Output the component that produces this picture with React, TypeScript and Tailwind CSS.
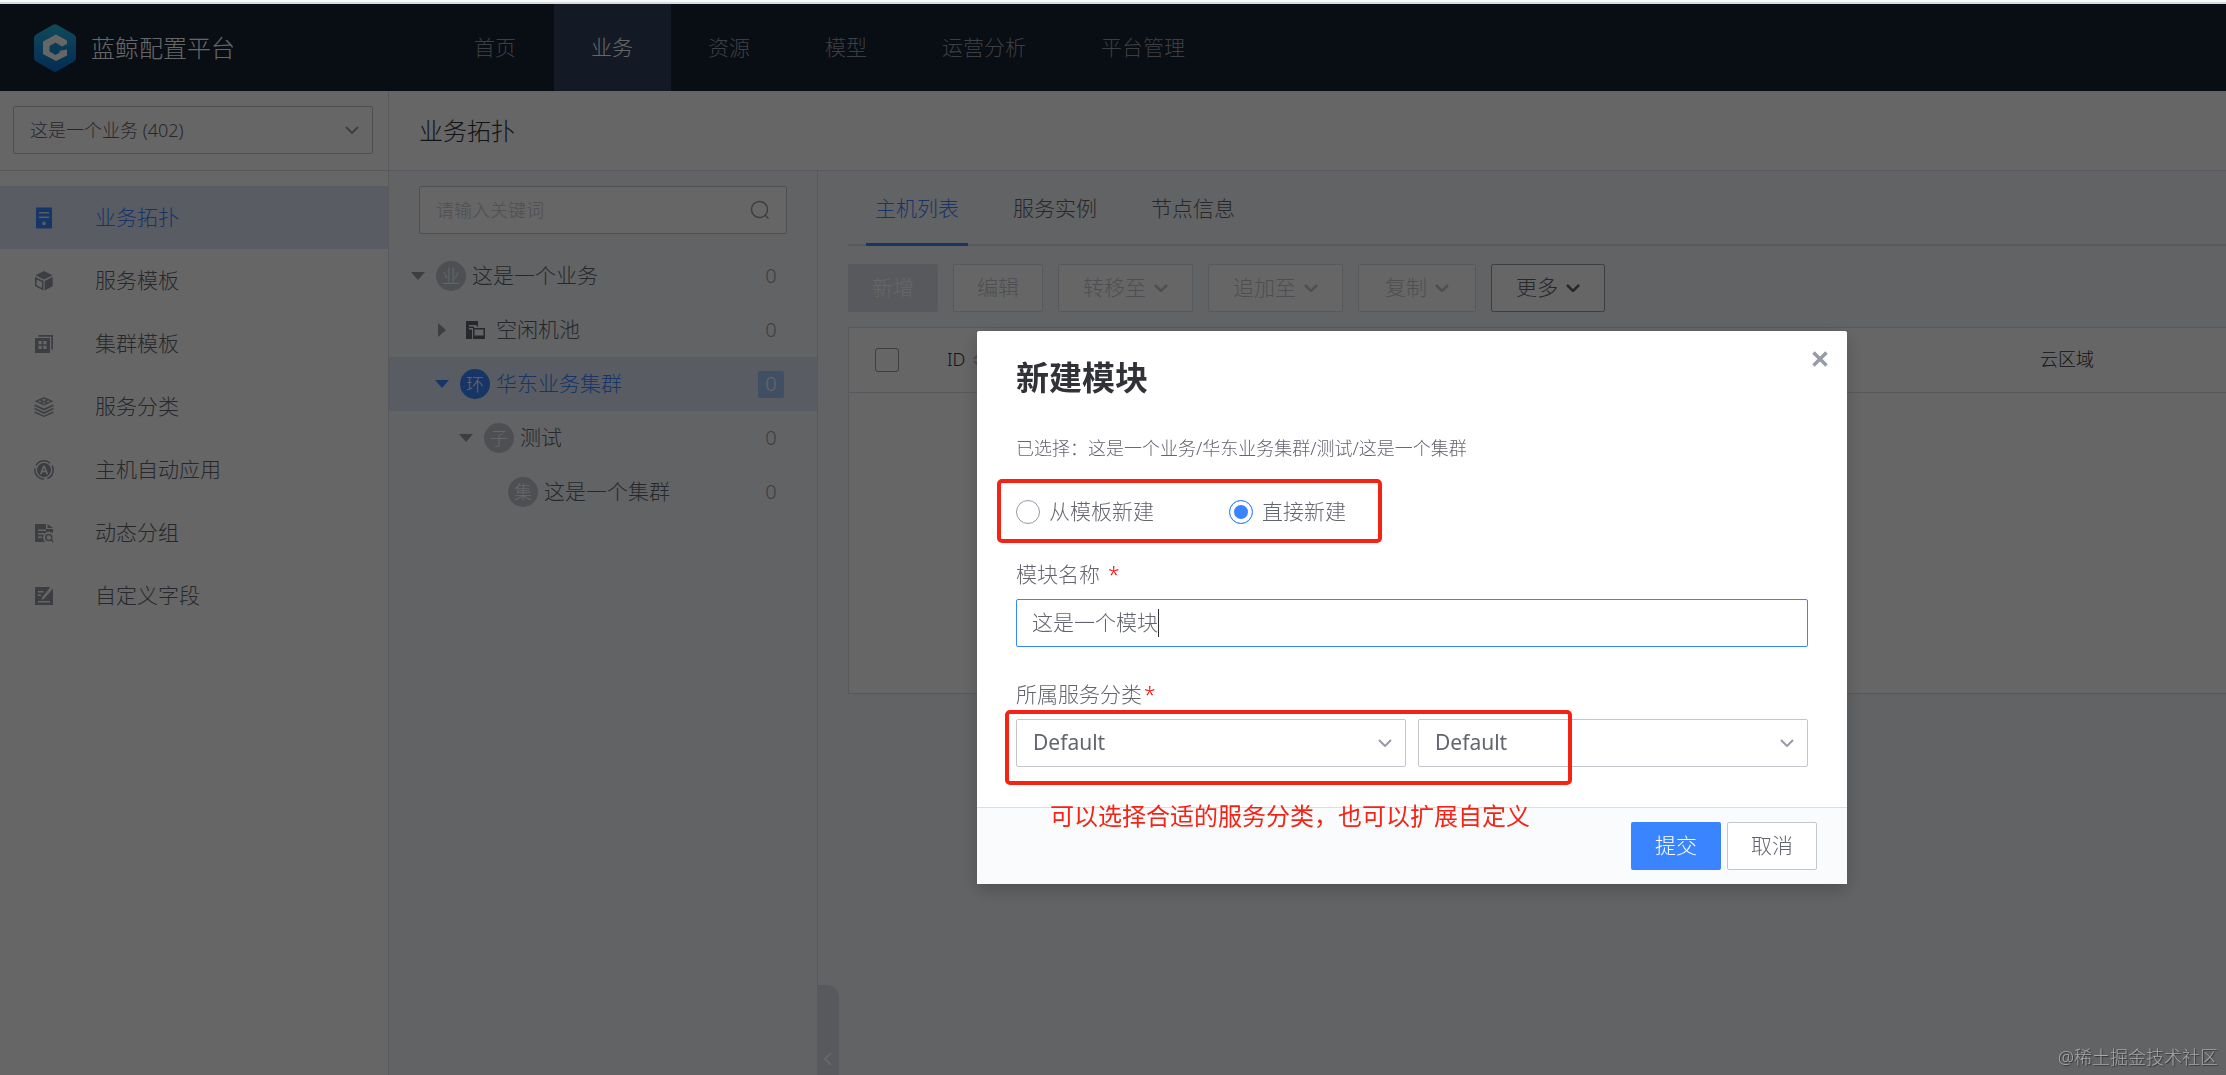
import React, { useState } from 'react';
import clsx from 'clsx';

const FONT = "font-['Noto_Sans','Noto_Sans_CJK_SC',sans-serif]";

const NAV = ['首页', '业务', '资源', '模型', '运营分析', '平台管理'];

/* ---------- icons ---------- */

function Chevron({ className, width = 2 }: { className?: string; width?: number }) {
  return (
    <svg viewBox="0 0 14 8" fill="none" stroke="currentColor" strokeWidth={width} className={clsx('w-3.5 h-2 shrink-0', className)}>
      <path d="M1 1l6 6 6-6" />
    </svg>
  );
}

function Logo() {
  return (
    <svg viewBox="0 0 42 48" className="w-[42px] h-12 shrink-0">
      <defs>
        <linearGradient id="logo-bg" x1="0" y1="0" x2="0" y2="1">
          <stop offset="0" stopColor="#2ab8e0" />
          <stop offset="1" stopColor="#0a6fd0" />
        </linearGradient>
      </defs>
      <path d="M19 .8a4 4 0 0 1 4 0l17 9.8a4 4 0 0 1 2 3.4v20a4 4 0 0 1-2 3.4l-17 9.8a4 4 0 0 1-4 0L2 37.4A4 4 0 0 1 0 34V14a4 4 0 0 1 2-3.4z" fill="url(#logo-bg)" />
      <path d="M22 10.500l11 6v3.500l-5 2.500-6.500-4-6 3.500v5.500l6 3.500 5-3-2-1 8.500-1.500v6L22 37l-13-7V17.500z" fill="#fff" />
    </svg>
  );
}

function MenuIcon({ name }: { name: string }) {
  return (
    <svg viewBox="0 0 20 22" fill="currentColor" className="w-5 h-[22px] shrink-0">
      {name === 'topology' && (
        <path fillRule="evenodd" d="M2 .5h16v21H2zM5 5v1.500h10V5zm0 4.500V11h10V9.500zm5 5a1.800 1.800 0 1 0 .01 0z" />
      )}
      {name === 'service' && (
        <>
          <path d="M10 1l8.500 4.200L10 9.600 1.500 5.200z" />
          <path d="M10.700 11l8-4.300v9.500l-8 4.400z" />
          <path fillRule="evenodd" d="M1 6.700l8.500 4.300v9.600L1 16.200zm1.600 2.700v5.800l5.300 2.700v-5.800z" />
        </>
      )}
      {name === 'cluster' && (
        <>
          <path d="M4.500 2H19v14.500h-1.700V3.700H4.500z" />
          <path fillRule="evenodd" d="M1 5h15v15H1zM4.500 8v3.200h3.200V8zm4.800 0v3.200h3.200V8zm-4.800 4.800V16h3.200v-3.200zm4.800 0V16h3.200v-3.200z" />
        </>
      )}
      {name === 'category' && (
        <>
          <path fillRule="evenodd" d="M10 1l9.500 4.300L10 9.600.5 5.300zm0 1.800L7.500 4 10 5.100 12.500 4zM5.500 4.400L3.700 5.300 6 6.300 8 5.400zm9 0l-2.500 1 2 .9 2.300-1zM10 6.200l-2 .9 2 .8 2-.8z" />
          <path d="M.5 8.200L10 12.500l9.500-4.300v1.900L10 14.400.5 10.100zM.5 11.700L10 16l9.500-4.300v1.900L10 17.900.5 13.600zM.5 15.200L10 19.500l9.500-4.300v1.900L10 21 .5 17.100z" />
        </>
      )}
      {name === 'auto' && (
        <>
          <circle cx="10" cy="11" r="9.200" fill="none" stroke="currentColor" strokeWidth="1.600" strokeDasharray="16 3.300" strokeDashoffset="5" />
          <path fillRule="evenodd" d="M10 4a7 7 0 1 0 .01 0zm-1 2.700h2l3.200 8.600h-1.900l-.7-2H8.400l-.7 2H5.800zm1 2.100l-1 3h2z" />
        </>
      )}
      {name === 'group' && (
        <>
          <path fillRule="evenodd" d="M1 2h11v5h7v4.200a5.500 5.500 0 0 0-8 8.800H1zm3 5.500V9h8V7.500zM4 11v1.500h6V11zm0 3.500V16h4v-1.500z" />
          <path d="M13.500 2L19 6h-5.500z" />
          <circle cx="14.800" cy="15.500" r="3" fill="none" stroke="currentColor" strokeWidth="1.500" />
          <path d="M16.300 18l1-1 2.500 2.500-1 1z" />
        </>
      )}
      {name === 'field' && (
        <path fillRule="evenodd" d="M1 2h15.500L8.200 12.300 7.500 15l2.500-1.200L19 3.500V20H1zm3 4v1.400h5.500V6zm0 3.500v1.400h3V9.500zM4 16v1.400h12V16z" />
      )}
    </svg>
  );
}

function PoolIcon() {
  return (
    <svg viewBox="0 0 20 20" fill="currentColor" className="w-5 h-5 shrink-0">
      <path fillRule="evenodd" d="M1 1h12v5.500h-1.500V5H4v1.500h5V8H4v1.500h3V19H1z" />
      <path fillRule="evenodd" d="M8 8h12v11H8zm1.500 1.500v6h9v-6z" />
    </svg>
  );
}

/* ---------- data ---------- */

const MENU = [
  { icon: 'topology', label: '业务拓扑' },
  { icon: 'service', label: '服务模板' },
  { icon: 'cluster', label: '集群模板' },
  { icon: 'category', label: '服务分类' },
  { icon: 'auto', label: '主机自动应用' },
  { icon: 'group', label: '动态分组' },
  { icon: 'field', label: '自定义字段' },
];

interface TreeNode {
  label: string;
  badge?: string;
  arrow?: 'open' | 'closed';
  indent: string;
  active?: boolean;
}

const TREE: TreeNode[] = [
  { label: '这是一个业务', badge: '业', arrow: 'open', indent: 'pl-[21px]' },
  { label: '空闲机池', arrow: 'closed', indent: 'pl-[45px]' },
  { label: '华东业务集群', badge: '环', arrow: 'open', indent: 'pl-[45px]', active: true },
  { label: '测试', badge: '子', arrow: 'open', indent: 'pl-[69px]' },
  { label: '这是一个集群', badge: '集', indent: 'pl-[93px]' },
];

const ACTIONS = [
  { label: '编辑', width: 'w-[90px]' },
  { label: '转移至', width: 'w-[135px]', menu: true },
  { label: '追加至', width: 'w-[135px]', menu: true },
  { label: '复制', width: 'w-[118px]', menu: true },
  { label: '更多', width: 'w-[114px]', menu: true, enabled: true },
];

/* ---------- page sections ---------- */

function Header() {
  return (
    <header className="flex items-stretch h-[87px] bg-[#182132]">
      <div className="flex items-center w-[437px] pl-[34px] gap-[15px]">
        <Logo />
        <h1 className="text-[24px] text-white">蓝鲸配置平台</h1>
      </div>
      <nav className="flex">
        {NAV.map((item) => (
          <a
            key={item}
            href="#"
            className={clsx(
              'flex items-center pl-[37px] pr-[38px] text-[21px]',
              item === '业务' ? 'bg-[#343f5f] text-white' : 'text-[#979ba5]',
            )}
          >
            {item}
          </a>
        ))}
      </nav>
    </header>
  );
}

function Sidebar() {
  return (
    <aside className="w-[389px] shrink-0 border-r border-[#dcdee5] bg-white">
      <div className="h-20 border-b border-[#dcdee5] pt-[15px] pl-[13px] pr-[15px]">
        <div className="relative">
          <select
            aria-label="业务"
            className="appearance-none w-full h-12 pl-4 rounded-xs border border-[#c4c6cc] bg-white text-[18px] text-[#63656e]"
          >
            <option>这是一个业务 (402)</option>
          </select>
          <Chevron className="absolute right-3.5 top-5 text-[#979ba5] pointer-events-none" />
        </div>
      </div>
      <nav className="pt-[15px]">
        {MENU.map((item, i) => (
          <a
            key={item.label}
            href="#"
            className={clsx(
              'flex items-center h-[63px] pl-[34px] gap-[41px] text-[21px]',
              i === 0 ? 'bg-[#dfe7f8] text-[#3a84ff]' : 'text-[#63656e]',
            )}
          >
            <span className={i === 0 ? 'text-[#3a84ff]' : 'text-[#979ba5]'}>
              <MenuIcon name={item.icon} />
            </span>
            {item.label}
          </a>
        ))}
      </nav>
    </aside>
  );
}

function TreeRow({ node }: { node: TreeNode }) {
  return (
    <li
      className={clsx(
        'flex items-center h-[54px] pr-[33px] text-[21px]',
        node.indent,
        node.active ? 'bg-[#dfe7f8] text-[#3a84ff]' : 'text-[#63656e]',
      )}
    >
      <span className={clsx('flex justify-center w-[16px] mr-2.5', !node.active && 'text-[#979ba5]')}>
        {node.arrow === 'open' && (
          <svg viewBox="0 0 14 8" fill="currentColor" className="w-3.5 h-2"><path d="M0 0h14L7 8z" /></svg>
        )}
        {node.arrow === 'closed' && (
          <svg viewBox="0 0 8 14" fill="currentColor" className="w-2 h-3.5"><path d="M0 0v14l8-7z" /></svg>
        )}
      </span>
      <span className="flex justify-center w-[30px] mr-1.5">
        {node.badge ? (
          <span
            className={clsx(
              'flex items-center justify-center size-[30px] rounded-full text-[18px] text-white',
              node.active ? 'bg-[#3a84ff]' : 'bg-[#c4c6cc]',
            )}
          >
            {node.badge}
          </span>
        ) : (
          <PoolIcon />
        )}
      </span>
      <span className="flex-1">{node.label}</span>
      <span
        className={clsx(
          'flex items-center justify-center w-[26px] h-[27px] rounded-xs text-[20px]',
          node.active ? 'bg-[#a2c5fd] text-white' : 'text-[#979ba5]',
        )}
      >
        0
      </span>
    </li>
  );
}

function TopologyPanel() {
  return (
    <section className="relative w-[429px] shrink-0 border-r border-[#dcdee5] pt-[15px]">
      <label className="flex items-center h-12 mx-[30px] px-4 rounded-xs border border-[#c4c6cc] bg-white">
        <input
          type="text"
          aria-label="搜索"
          placeholder="请输入关键词"
          className="flex-1 min-w-0 outline-none font-light text-[18px] placeholder:text-[#c4c6cc]"
        />
        <svg viewBox="0 0 20 20" fill="none" stroke="#979ba5" strokeWidth="1.500" className="size-5">
          <circle cx="9.500" cy="9.500" r="8" />
          <path d="M15.500 15.500l3 3" />
        </svg>
      </label>
      <ul className="mt-[15px]">
        {TREE.map((node) => (
          <TreeRow key={node.label} node={node} />
        ))}
      </ul>
      {/* Collapse handle, hangs over the main area */}
      <button
        aria-label="收起"
        className="absolute left-full bottom-0 w-[22px] h-[90px] rounded-tr-[12px] bg-[#dcdee5] text-white"
      >
        <Chevron className="absolute bottom-3 left-1 rotate-90" />
      </button>
    </section>
  );
}

function HostPanel() {
  return (
    <section className="flex-1 min-w-0 pl-[30px]">
      <div className="flex h-[75px] border-b-2 border-[#dcdee5]">
        {['主机列表', '服务实例', '节点信息'].map((tab, i) => (
          <button
            key={tab}
            className={clsx('relative px-[27px] pt-0.5 text-[21px]', i === 0 ? 'text-[#3a84ff]' : 'text-[#63656e]')}
          >
            {tab}
            {i === 0 && <span className="absolute inset-x-[18px] -bottom-0.5 h-[3px] bg-[#3a84ff]" />}
          </button>
        ))}
      </div>
      <div className="flex gap-[15px] mt-[18px] text-[21px]">
        <button disabled className="w-[90px] h-12 rounded-xs bg-[#dcdee5] text-white">新增</button>
        {ACTIONS.map((action) => (
          <button
            key={action.label}
            disabled={!action.enabled}
            className={clsx(
              'flex items-center justify-center gap-2 h-12 rounded-xs border bg-white',
              action.width,
              action.enabled ? 'border-[#979ba5] text-[#63656e]' : 'border-[#dcdee5] text-[#c4c6cc]',
            )}
          >
            {action.label}
            {action.menu && <Chevron width={2.5} />}
          </button>
        ))}
      </div>
      <div className="mt-[15px] h-[367px] border-y border-l border-[#dcdee5] bg-white">
        <table className="w-full table-fixed text-[18px] text-[#313238]">
          <thead>
            <tr className="h-16 border-b border-[#dcdee5]">
              <th className="w-[98px] pl-[26px] text-left">
                <input type="checkbox" aria-label="全选" className="block appearance-none size-6 rounded-[3px] border border-[#979ba5] bg-white" />
              </th>
              <th className="text-left font-light">
                <span className="flex items-center gap-2">
                  ID
                  <svg viewBox="0 0 10 16" fill="#c4c6cc" className="w-2.5 h-4"><path d="M0 7l5-6 5 6zM0 9l5 6 5-6z" /></svg>
                </span>
              </th>
              <th className="w-[186px] text-left font-light">云区域</th>
            </tr>
          </thead>
        </table>
      </div>
    </section>
  );
}

/* ---------- dialog ---------- */

function Required() {
  return <span className="text-[#f00]">*</span>;
}

function CreateModuleDialog() {
  const [mode, setMode] = useState('direct');
  const [name, setName] = useState('这是一个模块');

  const modes = [
    { value: 'template', label: '从模板新建' },
    { value: 'direct', label: '直接新建' },
  ];

  return (
    <div role="dialog" aria-labelledby="dialog-title" className="relative w-[870px] rounded-xs bg-white shadow-[0_6px_18px_rgba(0,0,0,0.2)] text-[21px] text-[#63656e]">
      <button aria-label="关闭" className="absolute top-5 right-[19px] text-[#979ba5]">
        <svg viewBox="0 0 16 16" fill="none" stroke="currentColor" strokeWidth="3.500" className="size-4">
          <path d="M1.500 1.500l13 13M14.500 1.500l-13 13" />
        </svg>
      </button>

      <div className="px-[39px] pt-[25px] pb-10">
        <h2 id="dialog-title" className="text-[33px] leading-[44px] font-bold text-[#313238]">新建模块</h2>
        <p className="mt-[35px] text-[18px] leading-[26px]">已选择：这是一个业务/华东业务集群/测试/这是一个集群</p>

        <div className="flex gap-[75px] mt-[39px]">
          {modes.map((item) => (
            <label key={item.value} className="flex items-center gap-[9px] h-6">
              <input
                type="radio"
                name="mode"
                value={item.value}
                checked={mode === item.value}
                onChange={() => setMode(item.value)}
                className="appearance-none size-6 rounded-full border border-[#979ba5] checked:border-[#3a84ff] checked:bg-[#3a84ff] checked:shadow-[inset_0_0_0_4px_#fff]"
              />
              {item.label}
            </label>
          ))}
        </div>

        <label htmlFor="module-name" className="flex gap-2 mt-9 leading-7">
          模块名称
          <Required />
        </label>
        <div className="flex items-center h-12 mt-[11px] pl-[15px] rounded-xs border border-[#3a84ff]">
          <input
            id="module-name"
            value={name}
            onChange={(e) => setName(e.target.value)}
            className="field-sizing-content outline-none font-light caret-transparent"
          />
          <span className="w-px h-7 bg-[#313238]" />
        </div>

        <label htmlFor="category" className="flex gap-0.5 mt-[33px] leading-7">
          所属服务分类
          <Required />
        </label>
        <div className="grid grid-cols-2 gap-3 mt-[11px]">
          {['category', 'sub-category'].map((id) => (
            <div key={id} className="relative">
              <select id={id} aria-label="所属服务分类" className="appearance-none w-full h-12 pl-4 rounded-xs border border-[#c4c6cc] bg-white font-normal">
                <option>Default</option>
              </select>
              <Chevron className="absolute right-3.5 top-5 text-[#979ba5] pointer-events-none" />
            </div>
          ))}
        </div>
      </div>

      <footer className="flex justify-end gap-1.5 px-[30px] py-3.5 border-t border-[#dcdee5] bg-[#fafbfd]">
        <button className="w-[90px] h-12 rounded-xs bg-[#3a84ff] text-white">提交</button>
        <button className="w-[90px] h-12 rounded-xs border border-[#c4c6cc] bg-white">取消</button>
      </footer>

      {/* Red guide marks on top of the form */}
      <div className="absolute left-5 top-[148px] w-[385px] h-16 rounded-[5px] border-4 border-[#f52314] pointer-events-none" />
      <div className="absolute left-7 top-[379px] w-[567px] h-[75px] rounded-[5px] border-4 border-[#f52314] pointer-events-none" />
      <p className="absolute left-[73px] top-[467px] text-[24px] leading-9 font-normal text-[#f52314] whitespace-nowrap">
        可以选择合适的服务分类，也可以扩展自定义
      </p>
    </div>
  );
}

export default function App() {
  return (
    <div className={clsx('flex flex-col min-h-screen overflow-hidden bg-[#f5f7fa] font-light', FONT)}>
      <div className="relative z-20 h-1 border-b-2 border-[#d8dcdf] bg-[#f4f8f6]" />
      <Header />
      <div className="flex flex-1">
        <Sidebar />
        <main className="flex flex-col flex-1 min-w-0">
          <h2 className="flex items-center h-20 pl-[30px] border-b border-[#dcdee5] bg-white text-[24px] text-[#313238]">业务拓扑</h2>
          <div className="flex flex-1">
            <TopologyPanel />
            <HostPanel />
          </div>
        </main>
      </div>

      <div className="fixed inset-0 z-10 flex items-start justify-center pt-[331px] pl-[598px] bg-black/60">
        <CreateModuleDialog />
      </div>

      <span className="fixed right-2 bottom-1.5 z-20 text-[18px] leading-6 text-[#a8a8a8] [text-shadow:1px_1px_1px_#333]">
        @稀土掘金技术社区
      </span>
    </div>
  );
}
